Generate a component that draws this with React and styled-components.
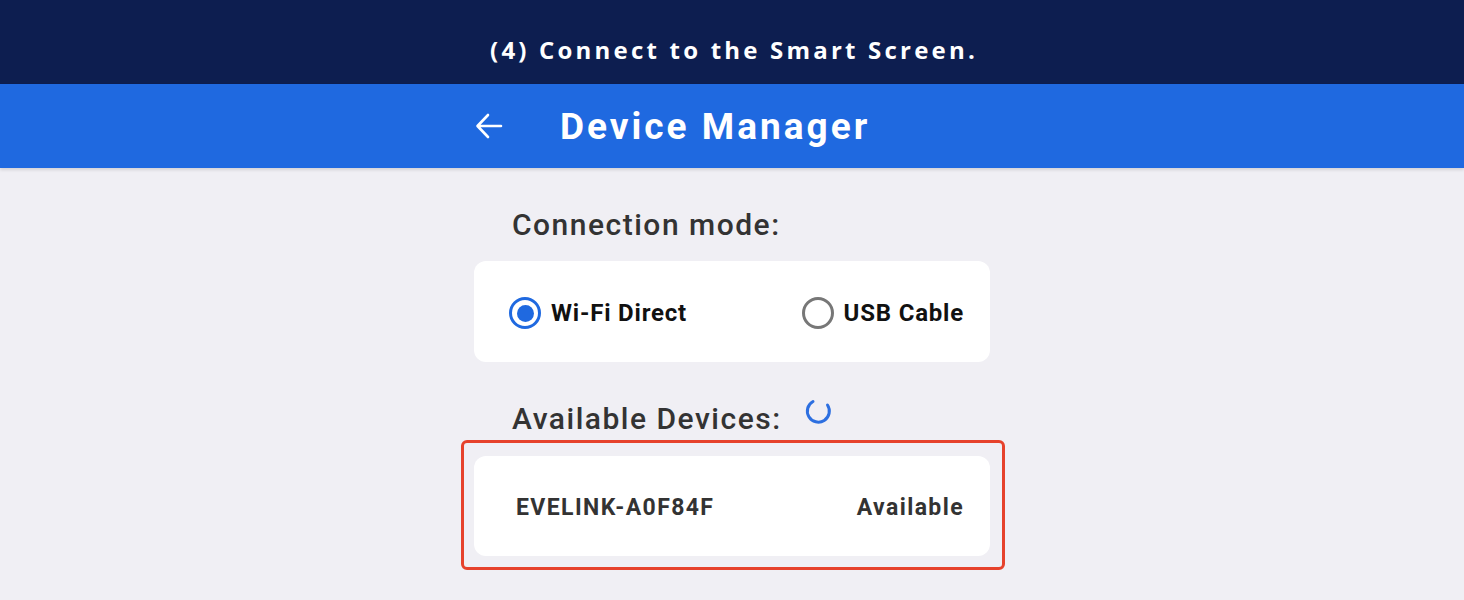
import React from "react";
import styled, { createGlobalStyle } from "styled-components";

const GlobalStyle = createGlobalStyle`
    html, body {
        margin: 0;
        padding: 0;
        background: #f0eff4;
    }
    body {
        font-family: Roboto, "Liberation Sans", sans-serif;
    }
`;

const Page = styled.div`
    width: 1464px;
    height: 600px;
    overflow: hidden;
    background: #f0eff4;
`;

const Banner = styled.div`
    height: 84px;
    background: #0d1e50;
    display: flex;
    align-items: center;
    justify-content: center;
    color: #fff;
    font-family: "Open Sans", "Noto Sans", sans-serif;
    font-weight: 700;
    font-size: 24px;
    letter-spacing: 3.2px;
    padding-top: 14px;
    padding-left: 4px;
    box-sizing: border-box;
`;

const AppBar = styled.div`
    height: 84px;
    background: #1f69e0;
    display: flex;
    align-items: center;
    padding-left: 474px;
    box-shadow: 0 2px 3px rgba(0, 0, 0, 0.12);
    position: relative;
    z-index: 1;
`;

const BackButton = styled.div`
    width: 30px;
    height: 30px;
    display: flex;
    align-items: center;
    justify-content: center;
    margin-right: 56px;
`;

const AppTitle = styled.div`
    color: #fff;
    font-size: 37px;
    font-weight: 700;
    letter-spacing: 3px;
`;

const Content = styled.div`
    width: 516px;
    margin-left: 474px;
    padding-top: 36px;
    display: flex;
    flex-direction: column;
`;

const SectionTitle = styled.div`
    display: flex;
    align-items: center;
    gap: ${(p) => p.$iconGap || 0}px;
    padding-left: 38px;
    font-size: 30px;
    font-weight: 500;
    letter-spacing: 1.5px;
    color: #333;
    height: 40px;
    margin-top: ${(p) => p.$top || 0}px;
    margin-bottom: ${(p) => p.$gap}px;
`;

const Card = styled.div`
    background: #fff;
    border-radius: 12px;
    height: 101px;
    display: flex;
    align-items: center;
    justify-content: space-between;
    padding: 3px 26px 0 35px;
    box-sizing: border-box;
`;

const Option = styled.div`
    display: flex;
    align-items: center;
    gap: 10px;
    font-size: 24px;
    font-weight: 700;
    letter-spacing: 0.8px;
    color: #111;
`;

const Radio = styled.div`
    width: 32px;
    height: 32px;
    border-radius: 50%;
    box-sizing: border-box;
    border: 3.5px solid ${(p) => (p.$checked ? "#1f69e0" : "#777")};
    display: flex;
    align-items: center;
    justify-content: center;

    &::after {
        content: "";
        width: 17px;
        height: 17px;
        border-radius: 50%;
        background: ${(p) => (p.$checked ? "#1f69e0" : "transparent")};
    }
`;

const Highlight = styled.div`
    margin: 2px -15px 0 -13px;
    border: 3px solid #e6422c;
    border-radius: 6px;
    padding: 13px 12px 11px 10px;
`;

const DeviceCard = styled(Card)`
    height: 100px;
    padding: 3px 26px 0 42px;
    font-size: 23px;
    font-weight: 700;
    letter-spacing: 1.4px;
    color: #333;
`;

const ArrowIcon = () => (
    <svg width="28" height="26" viewBox="0 0 28 26" fill="none">
        <path d="M26 13H3M13 2L2.5 13L13 24" stroke="#fff" strokeWidth="2.6" strokeLinecap="round" strokeLinejoin="round" />
    </svg>
);

const Spinner = () => (
    <svg width="28" height="28" viewBox="0 0 28 28" fill="none" style={{ marginTop: -14 }}>
        <path d="M9 4.5 A11 11 0 1 0 23.5 8" stroke="#2d6fe0" strokeWidth="3" strokeLinecap="round" />
    </svg>
);

const App = () => {
    return (
        <Page>
            <GlobalStyle />
            <Banner>(4) Connect to the Smart Screen.</Banner>
            <AppBar>
                <BackButton>
                    <ArrowIcon />
                </BackButton>
                <AppTitle>Device Manager</AppTitle>
            </AppBar>
            <Content>
                <SectionTitle $gap={17}>Connection mode:</SectionTitle>
                <Card>
                    <Option>
                        <Radio $checked />
                        Wi-Fi Direct
                    </Option>
                    <Option>
                        <Radio />
                        USB Cable
                    </Option>
                </Card>
                <SectionTitle $gap={0} $top={36} $iconGap={22}>
                    Available Devices:
                    <Spinner />
                </SectionTitle>
                <Highlight>
                    <DeviceCard>
                        <span>EVELINK-A0F84F</span>
                        <span>Available</span>
                    </DeviceCard>
                </Highlight>
            </Content>
        </Page>
    );
};

export default App;
